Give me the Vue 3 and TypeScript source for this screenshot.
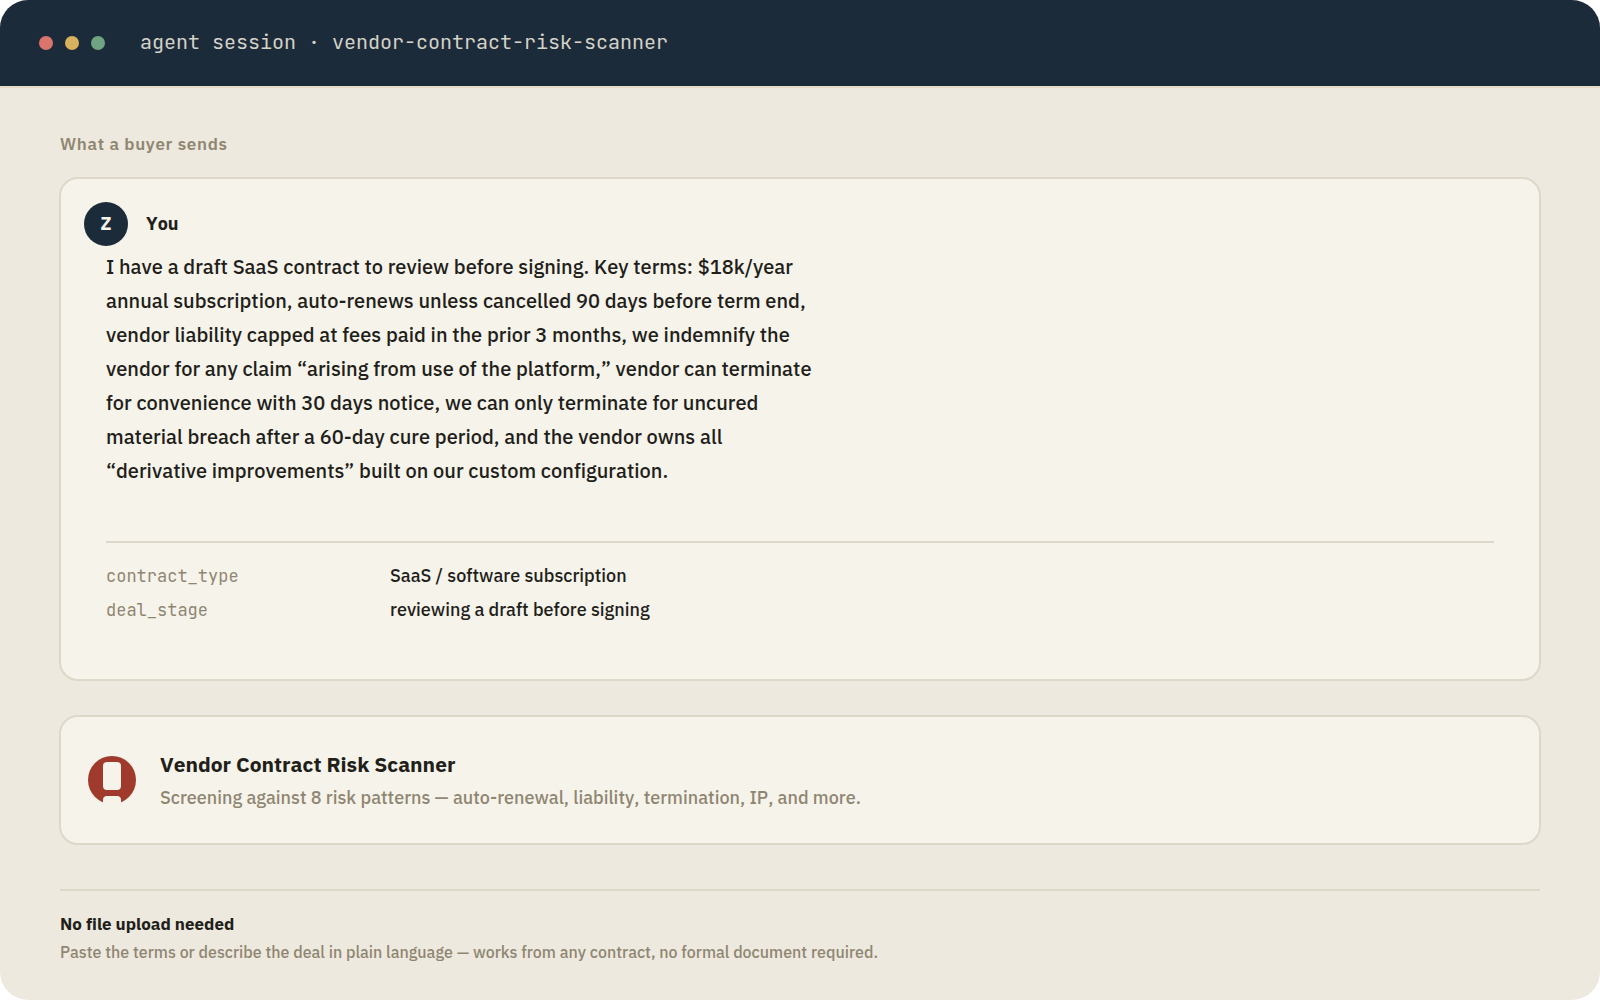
<script setup lang="ts">
const lines: string[] = [
  'I have a draft SaaS contract to review before signing. Key terms: $18k/year',
  'annual subscription, auto-renews unless cancelled 90 days before term end,',
  'vendor liability capped at fees paid in the prior 3 months, we indemnify the',
  'vendor for any claim “arising from use of the platform,” vendor can terminate',
  'for convenience with 30 days notice, we can only terminate for uncured',
  'material breach after a 60-day cure period, and the vendor owns all',
  '“derivative improvements” built on our custom configuration.',
]

const fields: { key: string; value: string }[] = [
  { key: 'contract_type', value: 'SaaS / software subscription' },
  { key: 'deal_stage', value: 'reviewing a draft before signing' },
]
</script>

<template>
  <div class="window">
    <header class="titlebar">
      <div class="lights" aria-hidden="true">
        <span class="light red"></span>
        <span class="light amber"></span>
        <span class="light green"></span>
      </div>
      <span class="session">agent session · vendor-contract-risk-scanner</span>
    </header>

    <main class="content">
      <h1 class="eyebrow">What a buyer sends</h1>

      <section class="card message">
        <div class="author">
          <span class="avatar">Z</span>
          <span class="name">You</span>
        </div>
        <div class="body">
          <p class="prompt">
            <template v-for="(line, i) in lines" :key="i">{{ line }}<br v-if="i < lines.length - 1" /></template>
          </p>
          <dl class="fields">
            <div v-for="field in fields" :key="field.key" class="field">
              <dt>{{ field.key }}</dt>
              <dd>{{ field.value }}</dd>
            </div>
          </dl>
        </div>
      </section>

      <section class="card agent">
        <svg class="logo" viewBox="0 0 48 48" aria-hidden="true">
          <circle cx="24" cy="24" r="24" fill="#9f3a2d" />
          <rect x="15" y="6" width="18" height="28" rx="4" fill="#f6f3ea" />
          <rect x="15" y="40" width="18" height="12" rx="4" fill="#f6f3ea" />
        </svg>
        <div>
          <h2 class="agent-name">Vendor Contract Risk Scanner</h2>
          <p class="agent-status">Screening against 8 risk patterns — auto-renewal, liability, termination, IP, and more.</p>
        </div>
      </section>

      <footer class="note">
        <p class="note-title">No file upload needed</p>
        <p class="note-text">Paste the terms or describe the deal in plain language — works from any contract, no formal document required.</p>
      </footer>
    </main>
  </div>
</template>

<style scoped>
.window {
  box-sizing: border-box;
  min-height: 100vh;
  overflow: hidden;
  border-radius: 28px;
  background: #ede9de;
  color: #221e1a;
  font-family: "IBM Plex Sans", "Noto Sans", sans-serif;
  font-weight: 500;
  font-kerning: none;
  font-variant-ligatures: none;
}

h1,
h2,
p,
dl,
dd {
  margin: 0;
}

.titlebar {
  display: flex;
  align-items: center;
  gap: 35px;
  height: 86px;
  padding: 0 39px;
  border-bottom: 2px solid #e8dcc6;
  background: #1c2b3a;
}

.lights {
  display: flex;
  gap: 12px;
}

.light {
  width: 14px;
  height: 14px;
  border-radius: 50%;
}

.red {
  background: #d9756c;
}

.amber {
  background: #d9b25f;
}

.green {
  background: #6fa382;
}

.session {
  padding-bottom: 2px;
  color: #d5d2c8;
  font-family: "JetBrains Mono", "DejaVu Sans Mono", monospace;
  font-size: 20px;
  font-weight: 400;
  line-height: 28px;
}

.content {
  padding: 44px 59px 32px;
}

.eyebrow {
  padding-left: 1px;
  margin-bottom: 21px;
  color: #8f8672;
  font-size: 17px;
  font-weight: 600;
  letter-spacing: 0.04em;
  line-height: 24px;
}

.card {
  border: 2px solid #ddd8c8;
  border-radius: 19px;
  background: #f6f3ea;
}

.message {
  padding: 23px 45px 52px;
}

.author {
  display: flex;
  align-items: center;
  gap: 18px;
  margin-left: -22px;
}

.avatar {
  display: flex;
  align-items: center;
  justify-content: center;
  width: 44px;
  height: 44px;
  border-radius: 50%;
  background: #1c2b3a;
  color: #f6f3ea;
  font-size: 18px;
  font-weight: 700;
  line-height: 24px;
}

.name {
  font-size: 18px;
  font-weight: 700;
  line-height: 24px;
}

.prompt {
  padding: 4px 0 53px;
  font-size: 20px;
  line-height: 34px;
}

.fields {
  padding-top: 16px;
  border-top: 2px solid #ddd8c8;
}

.field {
  display: flex;
  font-size: 18px;
  line-height: 34px;
}

dt {
  width: 284px;
  color: #8f8672;
  font-family: "JetBrains Mono", "DejaVu Sans Mono", monospace;
  font-size: 17px;
  font-weight: 400;
}

.agent {
  display: flex;
  align-items: center;
  gap: 24px;
  margin-top: 34px;
  padding: 29px 27px;
}

.logo {
  flex: none;
  width: 48px;
  height: 48px;
}

.agent-name {
  font-size: 21px;
  font-weight: 700;
  line-height: 36px;
}

.agent-status {
  color: #8f8672;
  font-size: 18px;
  line-height: 32px;
}

.note {
  margin: 44px 1px 0;
  padding-top: 19px;
  border-top: 2px solid #ddd8c8;
}

.note-title {
  font-size: 17px;
  font-weight: 700;
  line-height: 28px;
}

.note-text {
  color: #8f8672;
  font-size: 16px;
  line-height: 28px;
}
</style>

<style>
body {
  background: #ffffff;
}
</style>
